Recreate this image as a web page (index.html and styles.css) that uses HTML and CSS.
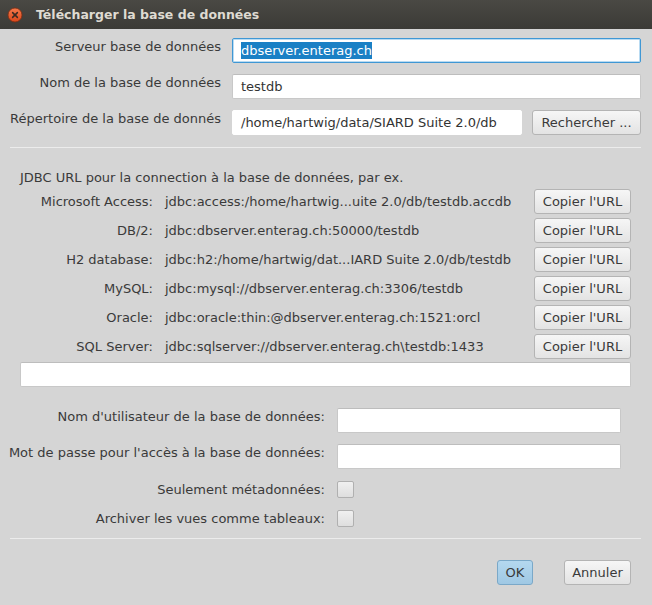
FILE: index.html
```html
<!DOCTYPE html>
<html lang="fr">
<head>
<meta charset="utf-8">
<title>Télécharger la base de données</title>
<link rel="stylesheet" href="styles.css">
</head>
<body>
<div class="window">
  <div class="titlebar">
    <span class="close-btn">
      <svg width="16" height="16" viewBox="0 0 16 16" aria-hidden="true">
        <defs>
          <linearGradient id="cg" x1="0" y1="0" x2="0" y2="1">
            <stop offset="0" stop-color="#f47a4c"/>
            <stop offset="1" stop-color="#d9461a"/>
          </linearGradient>
        </defs>
        <circle cx="8" cy="8" r="7" fill="url(#cg)" stroke="#7e2c10" stroke-width="0.8"/>
        <path d="M5.6 5.6 L10.4 10.4 M10.4 5.6 L5.6 10.4" stroke="#3a2a22" stroke-width="1.5" stroke-linecap="round"/>
      </svg>
    </span>
    <span class="title">Télécharger la base de données</span>
  </div>

  <div class="content">
    <div class="top-form">
      <div class="row">
        <span class="lbl">Serveur base de données</span>
        <div class="field focused"><span class="sel">dbserver.enterag.ch</span></div>
      </div>
      <div class="row">
        <span class="lbl">Nom de la base de données</span>
        <div class="field">testdb</div>
      </div>
      <div class="row">
        <span class="lbl">Répertoire de la base de donnés</span>
        <div class="field plain">/home/hartwig/data/SIARD Suite 2.0/db</div>
        <button class="btn browse">Rechercher ...</button>
      </div>
    </div>

    <div class="sep"></div>

    <div class="jdbc">
      <div class="jdbc-title">JDBC URL pour la connection à la base de données, par ex.</div>
      <div class="url-grid">
        <span class="url-lbl">Microsoft Access:</span>
        <span class="url">jdbc:access:/home/hartwig...uite 2.0/db/testdb.accdb</span>
        <button class="btn copy">Copier l'URL</button>

        <span class="url-lbl">DB/2:</span>
        <span class="url">jdbc:dbserver.enterag.ch:50000/testdb</span>
        <button class="btn copy">Copier l'URL</button>

        <span class="url-lbl">H2 database:</span>
        <span class="url">jdbc:h2:/home/hartwig/dat...IARD Suite 2.0/db/testdb</span>
        <button class="btn copy">Copier l'URL</button>

        <span class="url-lbl">MySQL:</span>
        <span class="url">jdbc:mysql://dbserver.enterag.ch:3306/testdb</span>
        <button class="btn copy">Copier l'URL</button>

        <span class="url-lbl">Oracle:</span>
        <span class="url">jdbc:oracle:thin:@dbserver.enterag.ch:1521:orcl</span>
        <button class="btn copy">Copier l'URL</button>

        <span class="url-lbl">SQL Server:</span>
        <span class="url">jdbc:sqlserver://dbserver.enterag.ch\testdb:1433</span>
        <button class="btn copy">Copier l'URL</button>
      </div>
      <div class="field wide"></div>
    </div>

    <div class="creds">
      <span class="lbl2">Nom d'utilisateur de la base de données:</span>
      <div class="field cred-field"></div>

      <span class="lbl2">Mot de passe pour l'accès à la base de données:</span>
      <div class="field cred-field"></div>

      <span class="lbl2 mid">Seulement métadonnées:</span>
      <span class="check"></span>

      <span class="lbl2 mid">Archiver les vues comme tableaux:</span>
      <span class="check"></span>
    </div>

    <div class="sep sep-bottom"></div>

    <div class="actions">
      <button class="btn ok">OK</button>
      <button class="btn cancel">Annuler</button>
    </div>
  </div>
</div>
</body>
</html>
```

FILE: styles.css
```css
* {
  box-sizing: border-box;
}

html, body {
  margin: 0;
  padding: 0;
  background: #d5d5d5;
}

body {
  font-family: "DejaVu Sans", "Liberation Sans", sans-serif;
  font-size: 13px;
  color: #3a3a3a;
}

.window {
  width: 652px;
  height: 605px;
  background: #d5d5d5;
  overflow: hidden;
}

/* Title bar */
.titlebar {
  height: 29px;
  background: linear-gradient(#4a4944, #3b3a36);
  display: flex;
  align-items: center;
  padding-left: 7px;
}

.close-btn {
  width: 16px;
  height: 16px;
  display: flex;
}

.title {
  margin-left: 13px;
  font-weight: bold;
  font-size: 12.5px;
  color: #dfdbd2;
  line-height: 29px;
}

/* Content */
.content {
  padding: 9px 11px 0 8px;
}

.top-form {
  display: flex;
  flex-direction: column;
  gap: 11px;
}

.row {
  display: flex;
  align-items: flex-start;
}

.lbl {
  width: 214px;
  text-align: right;
  line-height: 17px;
  padding-right: 1px;
  margin-right: 10px;
  white-space: nowrap;
}

.field {
  height: 25px;
  background: #ffffff;
  border: 1px solid #c8c8c8;
  border-top-color: #bdbdbd;
  border-radius: 2px;
  padding: 0 8px;
  line-height: 23px;
  color: #333333;
  white-space: nowrap;
  overflow: hidden;
}

.row .field {
  flex: 1;
}

.row .field.plain {
  flex: 0 0 290px;
  border-color: #ffffff;
}

.field.focused {
  border-color: #3f97d4;
  box-shadow: inset 0 0 0 1px #b9dbf2;
}

.sel {
  background: #1a80c5;
  color: #ffffff;
  display: inline-block;
  line-height: 17px;
  padding: 0;
}

.btn {
  font-family: "DejaVu Sans", "Liberation Sans", sans-serif;
  font-size: 13px;
  color: #3a3a3a;
  height: 25px;
  background: linear-gradient(#f6f6f6, #e3e3e3);
  border: 1px solid #b4b4b4;
  border-radius: 3px;
  padding: 0;
  line-height: 23px;
  text-align: center;
  white-space: nowrap;
}

.browse {
  width: 109px;
  margin-left: 10px;
}

.sep {
  height: 1px;
  background: #ececec;
  margin: 12px 0 0 2px;
}

/* JDBC section */
.jdbc {
  margin: 21px 10px 0 12px;
}

.jdbc-title {
  line-height: 17px;
}

.url-grid {
  margin-top: 3px;
  display: grid;
  grid-template-columns: 133px 1fr 97px;
  grid-auto-rows: 25px;
  column-gap: 12px;
  row-gap: 4px;
  align-items: center;
}

.url-lbl {
  text-align: right;
  white-space: nowrap;
}

.url {
  white-space: nowrap;
}

.copy {
  width: 97px;
}

.field.wide {
  margin-top: 3px;
  width: 100%;
}

/* Credentials */
.creds {
  margin-top: 21px;
  display: grid;
  grid-template-columns: 317px 284px;
  column-gap: 12px;
  row-gap: 11px;
  align-items: start;
}

.lbl2 {
  text-align: right;
  line-height: 17px;
  white-space: nowrap;
}

.lbl2.mid {
  align-self: center;
}

.check {
  width: 17px;
  height: 17px;
  background: linear-gradient(#f0f0f0, #dedede);
  border: 1px solid #b0b0b0;
  border-radius: 2px;
  margin-top: 1px;
}

.sep-bottom {
  margin-top: 11px;
}

.actions {
  display: flex;
  justify-content: flex-end;
  gap: 31px;
  margin: 21px 10px 0 0;
}

.ok {
  width: 36px;
  background: linear-gradient(#b4d8ef, #9fc8e4);
  border-color: #7aa8c8;
}

.cancel {
  width: 67px;
}
```
